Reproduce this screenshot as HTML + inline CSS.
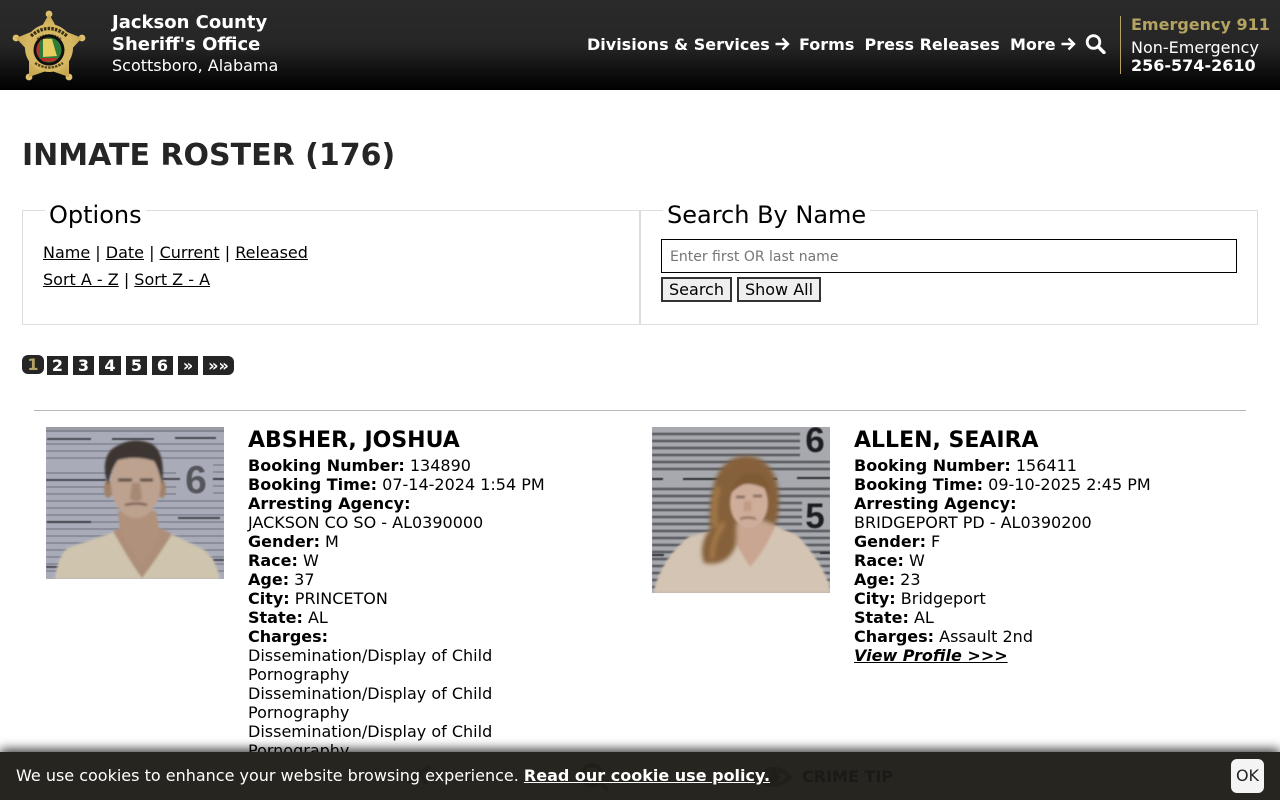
<!DOCTYPE html>
<html lang="en"><head><meta charset="utf-8"><title>Inmate Roster</title>
<style>
html,body{margin:0;padding:0;background:#fff;width:1280px;height:800px;overflow:hidden}
body{font-family:"DejaVu Sans",sans-serif;font-size:16px;color:#000;position:relative}
.a{position:absolute;white-space:nowrap}
a{color:inherit}
header{position:absolute;left:0;top:0;width:1280px;height:90px;background:linear-gradient(#2a2a2a 0,#262626 50%,#000 100%);color:#fff}
.nav{font-weight:bold;font-size:16px;line-height:20px;top:35px}
.pg{position:absolute;top:356px;height:19px;background:#252525;color:#fff;font-weight:bold;text-align:center;line-height:19px;font-size:16px}
.fs{position:absolute;border:1px solid #ddd;box-sizing:border-box}
.leg{position:absolute;top:200px;font-size:24px;line-height:30px;background:#fff;padding:0 4px}
.rec{position:absolute;top:456px;width:330px;line-height:19px;font-size:16px}
.rec b{font-weight:bold}
h2{position:absolute;margin:0;top:427.500px;font-size:22px;line-height:26px;font-weight:bold;white-space:nowrap}
.btn{position:absolute;top:277px;height:25px;box-sizing:border-box;border:2px solid #333;background:#efefef;font-size:16px;line-height:21px;text-align:center;color:#000}
</style></head><body>
<header>
<svg class="a" style="left:10px;top:8px" width="78" height="76" viewBox="0 0 78 76">
<defs><radialGradient id="g" cx=".5" cy=".5" r=".6"><stop offset="0" stop-color="#ecd27c"/><stop offset="1" stop-color="#c4a04a"/></radialGradient></defs>
<g fill="#dcc070"><circle cx="39" cy="6" r="3.400"/><circle cx="72" cy="30" r="3.400"/><circle cx="59" cy="69" r="3.400"/><circle cx="19" cy="69" r="3.400"/><circle cx="6" cy="30" r="3.400"/></g>
<polygon points="39,6 47,20 72,30 59,44 59,69 39,62 19,69 19,44 6,30 31,20" fill="url(#g)"/>
<circle cx="39" cy="40" r="24" fill="#d6b863"/>
<path d="M21 28q18-15 36 0" fill="none" stroke="#3a2e14" stroke-width="3.400" stroke-dasharray="2.500 1.200"/>
<path d="M27 31q12-8 24 0" fill="none" stroke="#6a5626" stroke-width="2" stroke-dasharray="2 1"/>
<path d="M25 55q14 9 28 0" fill="none" stroke="#5a4820" stroke-width="2.400" stroke-dasharray="2.500 1"/>
<circle cx="39" cy="42" r="15.500" fill="#101010"/>
<circle cx="39" cy="42" r="12.500" fill="#2f7c3a"/>
<path d="M39 29.500a12.500 12.500 0 0 0-9 21.300V32z" fill="#b5302a"/>
<path d="M33 31h9l4 14 1 3-14 1z" fill="#e8d060"/>
<path d="M30 50h18l-4 3.600h-11z" fill="#b5302a"/>
</svg>
<div class="a" style="left:112px;top:11.500px;font-size:18px;line-height:22px;font-weight:bold">Jackson County<br>Sheriff's Office</div>
<div class="a" style="left:112px;top:55.500px;font-size:16px;line-height:20px">Scottsboro, Alabama</div>
<div class="a nav" style="left:587px">Divisions &amp; Services</div>
<svg class="a" style="left:774px;top:36px" width="16" height="16" viewBox="0 0 16 16"><path d="M1.500 8H14M8.500 2.500 14 8l-5.500 5.500" fill="none" stroke="#fff" stroke-width="2.400"/></svg>
<div class="a nav" style="left:799px">Forms</div>
<div class="a nav" style="left:864.500px">Press Releases</div>
<div class="a nav" style="left:1010px">More</div>
<svg class="a" style="left:1060px;top:36px" width="16" height="16" viewBox="0 0 16 16"><path d="M1.500 8H14M8.500 2.500 14 8l-5.500 5.500" fill="none" stroke="#fff" stroke-width="2.400"/></svg>
<svg class="a" style="left:1085px;top:34px" width="21" height="20" viewBox="0 0 21 20"><circle cx="8.500" cy="8" r="6.300" fill="none" stroke="#fff" stroke-width="2.800"/><path d="M13 12.500 19 18.500" stroke="#fff" stroke-width="3.400" stroke-linecap="round"/></svg>
<div class="a" style="left:1120px;top:16px;width:1px;height:58px;background:#b5a362"></div>
<div class="a" style="left:1131px;top:14px;font-size:16px;line-height:21px;font-weight:bold;color:#b5a362">Emergency 911</div>
<div class="a" style="left:1131px;top:38px;font-size:16px;line-height:19px">Non-Emergency</div>
<div class="a" style="left:1131px;top:56px;font-size:16px;line-height:19px;font-weight:bold">256-574-2610</div>
</header>

<div class="a" style="left:22px;top:138px;font-size:30px;line-height:36px;font-weight:bold;color:#252525">INMATE ROSTER (176)</div>

<div class="fs" style="left:22px;top:210px;width:618px;height:115px"></div>
<div class="fs" style="left:640px;top:210px;width:618px;height:115px"></div>
<div class="leg" style="left:45px">Options</div>
<div class="leg" style="left:663px">Search By Name</div>
<div class="a" style="left:43px;top:243px;line-height:19px"><a href="#">Name</a> | <a href="#">Date</a> | <a href="#">Current</a> | <a href="#">Released</a></div>
<div class="a" style="left:43px;top:270px;line-height:19px"><a href="#">Sort A - Z</a> | <a href="#">Sort Z - A</a></div>
<div class="a" style="left:661px;top:239px;width:576px;height:34px;box-sizing:border-box;border:1px solid #000;padding-left:8px;font-size:14px;line-height:34px;color:#757575">Enter first OR last name</div>
<div class="btn" style="left:661px;width:71px">Search</div>
<div class="btn" style="left:737px;width:84px">Show All</div>

<div class="pg" style="left:22px;top:355px;width:22px;border-radius:6px;color:#b5a362">1</div>
<div class="pg" style="left:47px;width:21px">2</div>
<div class="pg" style="left:73px;width:21px">3</div>
<div class="pg" style="left:99px;width:22px">4</div>
<div class="pg" style="left:126px;width:21px">5</div>
<div class="pg" style="left:152px;width:21px">6</div>
<div class="pg" style="left:178px;width:20px">»</div>
<div class="pg" style="left:203px;width:31px;border-radius:0 6px 6px 0">»»</div>

<div class="a" style="left:34px;top:410px;width:1212px;height:1px;background:#b8b8b8"></div>

<svg class="a" style="left:46px;top:427px" width="178" height="152" viewBox="0 0 178 152">
<defs><filter id="b2"><feGaussianBlur stdDeviation="2"/></filter><filter id="b1"><feGaussianBlur stdDeviation="1"/></filter><filter id="b0"><feGaussianBlur stdDeviation=".45"/></filter></defs>
<rect width="178" height="152" fill="#a9acb8"/>
<rect width="178" height="5" fill="#9a9ca6"/>
<g stroke="#6b6d78" stroke-width="1.100" filter="url(#b0)"><path d="M0 4H178M0 17H178M0 24H178M0 31H178M0 46H130M0 60H130M0 67H130M0 74H178M0 81H178M0 88H178M0 95H178M0 102H178M0 109H178M0 116H178M0 123H178M0 130H178M0 137H178M0 144H178"/><path d="M167 38H178M167 45H178M167 52H178M167 59H178M167 66H178"/></g>
<g stroke="#3a3b43" stroke-width="1.800" filter="url(#b0)"><path d="M1 12H45M66 12H108M129 11H170M1 95H45M132 91H174M0 53H60M116 52H134M167 52H178M0 140H24M167 133H178"/></g>
<text x="150" y="66" font-family="Liberation Sans,sans-serif" font-weight="bold" font-size="39" fill="#55565c" text-anchor="middle" filter="url(#b0)">6</text>
<g filter="url(#b1)">
<path d="M9 152Q12 128 22 121L68 105 125 107 157 122Q170 132 174 152z" fill="#cfc4ae"/>
<path d="M67 104Q84 135 96 151Q112 130 126 107Q100 92 67 104z" fill="#ad8e79"/>
<path d="M72 84h38l4 24-18 30-22-32z" fill="#b0917c"/>
<ellipse cx="62" cy="62" rx="4" ry="9" fill="#a08068"/><ellipse cx="116" cy="62" rx="4" ry="9" fill="#a08068"/>
<ellipse cx="90" cy="56" rx="25" ry="35" fill="#bda290"/>
<path d="M62 58Q54 34 66 22Q86 8 106 17Q120 26 116 58Q113 42 108 34Q90 28 72 33Q65 42 62 58z" fill="#3c3630"/>
<path d="M72 53h14M94 53h13" stroke="#4f3f38" stroke-width="3"/>
<path d="M86 56l-2 16q6 4 12 0l-2-16" fill="#a68975"/>
<path d="M79 78q12-3 22 0" stroke="#6f4c43" stroke-width="2" fill="none"/>
</g></svg>

<svg class="a" style="left:652px;top:427px" width="178" height="166" viewBox="0 0 178 166">
<rect width="178" height="166" fill="#a8a9ae"/>
<g stroke="#595a60" stroke-width="2.400" filter="url(#b0)"><path d="M0 7H148M0 14H148M0 21H148M0 28H148M0 35H178M0 42H178M0 62H178M0 69H178M0 76H150M0 83H150M0 90H150M0 97H150M0 104H178M0 111H178M0 118H178M0 125H178M0 132H178M0 139H178M0 146H178M0 153H178M0 160H178"/></g>
<g stroke="#2c2d33" stroke-width="2" filter="url(#b0)"><path d="M0 52H11M31 52H125M145 51H178M0 128H12M168 126H178"/></g>
<text x="163" y="25" font-family="Liberation Sans,sans-serif" font-weight="bold" font-size="35" fill="#1d1d20" text-anchor="middle" filter="url(#b0)">6</text>
<text x="163" y="101" font-family="Liberation Sans,sans-serif" font-weight="bold" font-size="35" fill="#1d1d20" text-anchor="middle" filter="url(#b0)">5</text>
<g filter="url(#b1)">
<path d="M1 166Q10 130 38 109L90 98 122 98 146 109Q170 135 178 160V166z" fill="#d4c4b3"/>
<path d="M80 92l42 2 1 6Q112 125 98 140Q86 122 78 104z" fill="#c9a692"/>
</g>
<g filter="url(#b2)">
<path d="M52 136Q46 118 58 102Q56 78 62 56Q70 32 90 29Q114 27 124 52Q130 72 124 98L108 92 84 96 84 118Q76 140 52 136z" fill="#85613a"/>
<path d="M66 60Q60 84 64 100M72 96Q60 112 60 132" stroke="#a87d48" stroke-width="4" fill="none"/>
</g>
<g filter="url(#b1)">
<ellipse cx="97" cy="76" rx="19" ry="25" fill="#ceae9a"/>
<path d="M78 68Q84 48 98 46Q114 44 118 64Q100 54 90 58Q82 62 78 68z" fill="#7f5a34"/>
<path d="M88 92q8-3 16 0" stroke="#8a6052" stroke-width="2" fill="none"/>
<path d="M84 70h9M101 69h9" stroke="#6a5044" stroke-width="2.200"/>
<path d="M92 74l-1 10h9l-1-10" fill="#c09c87"/>
</g></svg>

<h2 style="left:248px">ABSHER, JOSHUA</h2>
<div class="rec" style="left:248px"><b>Booking Number:</b> 134890<br><b>Booking Time:</b> 07-14-2024 1:54 PM<br><b>Arresting Agency:</b><br>JACKSON CO SO - AL0390000<br><b>Gender:</b> M<br><b>Race:</b> W<br><b>Age:</b> 37<br><b>City:</b> PRINCETON<br><b>State:</b> AL<br><b>Charges:</b><br>Dissemination/Display of Child<br>Pornography<br>Dissemination/Display of Child<br>Pornography<br>Dissemination/Display of Child<br>Pornography</div>

<h2 style="left:854px">ALLEN, SEAIRA</h2>
<div class="rec" style="left:854px"><b>Booking Number:</b> 156411<br><b>Booking Time:</b> 09-10-2025 2:45 PM<br><b>Arresting Agency:</b><br>BRIDGEPORT PD - AL0390200<br><b>Gender:</b> F<br><b>Race:</b> W<br><b>Age:</b> 23<br><b>City:</b> Bridgeport<br><b>State:</b> AL<br><b>Charges:</b> Assault 2nd<br><a href="#"><b><i>View Profile &gt;&gt;&gt;</i></b></a></div>

<div class="a" style="left:0;top:752px;width:1280px;height:48px;background:#27251f;box-shadow:0 -3px 10px rgba(0,0,0,.75);color:#fff">
<div class="a" style="left:802px;top:14px;font-size:16px;line-height:22px;font-weight:bold;color:#1c1a16">CRIME TIP</div>
<svg class="a" style="left:400px;top:10px" width="400" height="30" viewBox="0 0 400 30"><g fill="none" stroke="#211f1a" stroke-width="4"><path d="M8 20 30 4M18 8l8 14"/><circle cx="192" cy="13" r="10"/><path d="M200 21l8 7"/><path d="M358 15q16-16 32 0q-16 16-32 0z"/></g><circle cx="374" cy="15" r="6" fill="#211f1a"/></svg>
<div class="a" style="left:16px;top:14px;line-height:19px">We use cookies to enhance your website browsing experience. <a href="#"><b>Read our cookie use policy.</b></a></div>
<div class="a" style="left:1231px;top:7px;width:33px;height:34px;background:#f4f4f4;color:#222;border-radius:6px;text-align:center;line-height:34px">OK</div>
</div>
</body></html>
